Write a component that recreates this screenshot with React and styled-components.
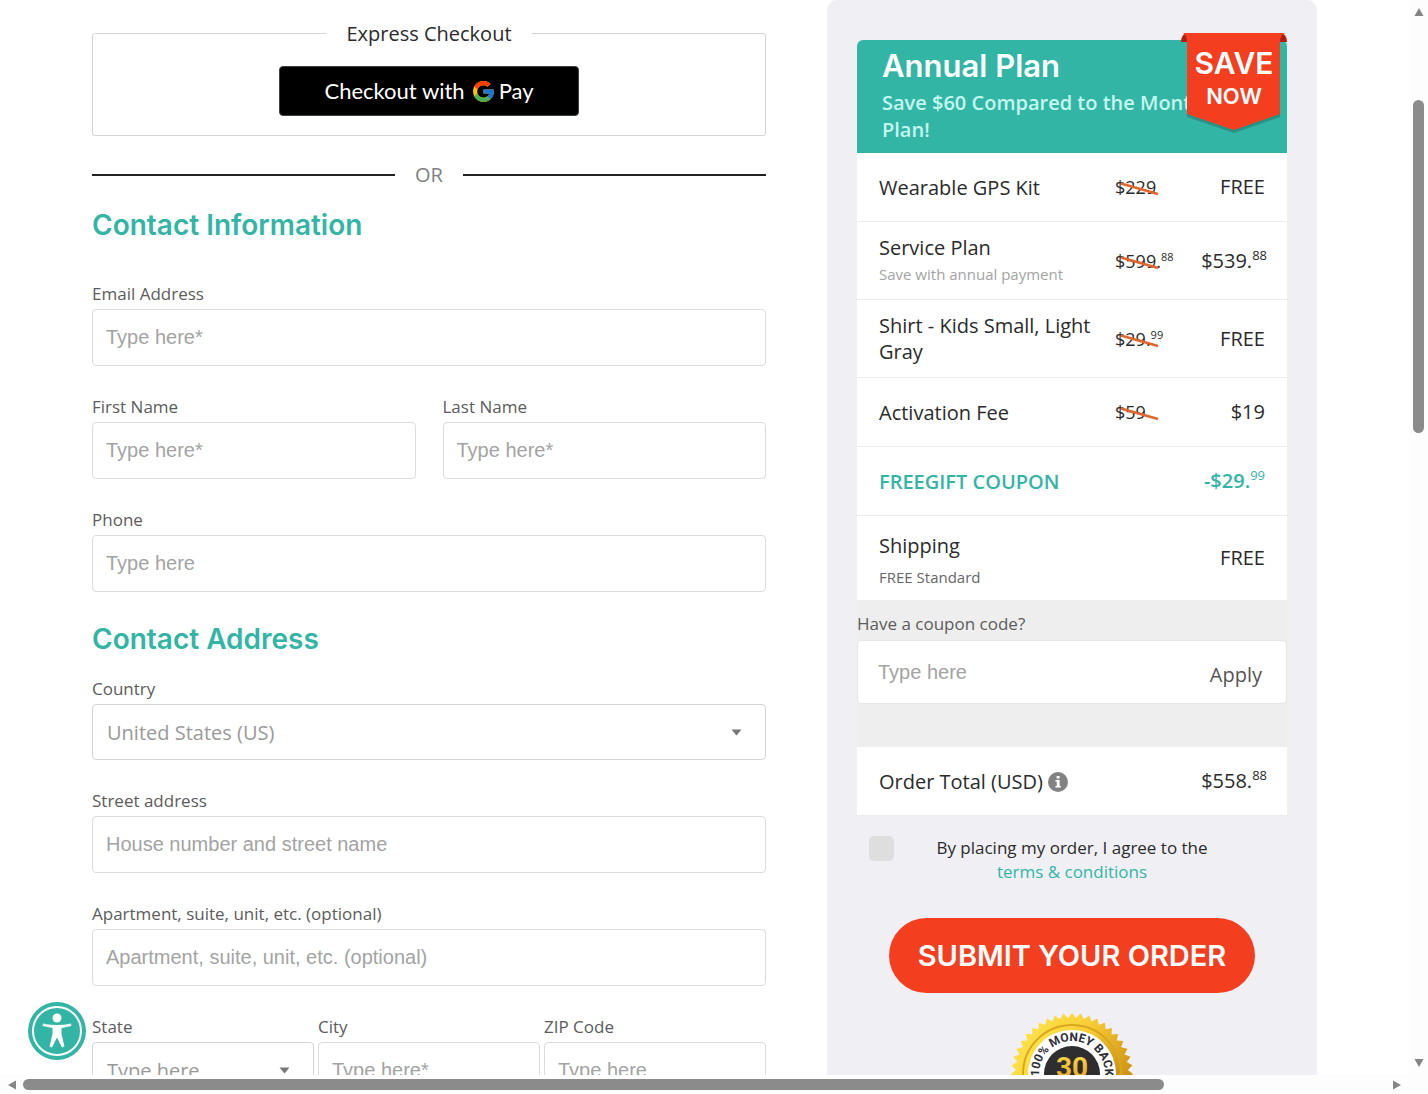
import React from 'react'
import styled, { createGlobalStyle } from 'styled-components'
import { FcGoogle } from 'react-icons/fc'

const GlobalStyle = createGlobalStyle`
    :root {
        --color-teal: #33b5a6;
        --color-red: #f43e20;
        --color-text: #2b2b2b;
        --color-label: #5c5c5c;
        --color-muted: #a3a3a3;
        --color-border: #dcdcdc;
        --font-body: 'Open Sans', sans-serif;
        --font-heading: Inter, sans-serif;
    }
    *, *::before, *::after {
        box-sizing: border-box;
    }
    body {
        margin: 0;
        background: #fff;
        color: var(--color-text);
        font-family: var(--font-body);
        font-size: 20px;
        line-height: 26px;
    }
`

const Shell = styled.div`
    display: grid;
    grid-template-columns: minmax(0, 1fr) 19px;
    grid-template-rows: minmax(0, 1fr) 19px;
    height: 100vh;
    background: #fdfdfd;
`
const Viewport = styled.main`
    position: relative;
    overflow: hidden;
    background: #fff;
`
const Page = styled.form`
    display: grid;
    grid-template-columns: minmax(0, 1fr) 490px;
    column-gap: 61px;
    padding: 0 92px;
`

/* Scrollbars */
const Scrollbar = styled.div`
    display: flex;
    flex-direction: ${(p) => (p.$vertical ? 'column' : 'row')};
    align-items: center;
    justify-content: space-between;
    padding: ${(p) => (p.$vertical ? '7px 0' : '0 7px')};
`
const Track = styled.div`
    display: flex;
    flex: 1;
    flex-direction: ${(p) => (p.$vertical ? 'column' : 'row')};
    align-self: stretch;
    align-items: center;
`
const Thumb = styled.div`
    flex: 0 0 ${(p) => p.$size};
    width: 11px;
    height: 11px;
    border-radius: 6px;
    background: #8b8b8b;
`
const Space = styled.div`
    flex: 0 0 ${(p) => p.$size};
`

/* Form column */
const FormColumn = styled.div`
    padding-top: 20px;
`
const Express = styled.fieldset`
    display: flex;
    justify-content: center;
    margin: 0 0 25px;
    padding: 19px 20px;
    border: 1px solid #d3d3d3;
    border-radius: 3px;
`
const Legend = styled.legend`
    margin: 0 auto;
    padding: 0 20px;
    line-height: 27px;
`
const GooglePay = styled.button`
    display: flex;
    align-items: center;
    justify-content: center;
    width: 300px;
    height: 50px;
    padding: 0;
    border: 1px solid #3c4043;
    border-radius: 4px;
    background: #000;
    color: #fff;
    font-family: Lato, sans-serif;
    font-size: 22px;
    line-height: 26px;

    svg {
        margin: 0 3px 0 6px;
    }
`
const Divider = styled.div`
    display: flex;
    align-items: center;
    gap: 20px;
    margin-bottom: 19px;
    color: #808080;
    line-height: 27px;

    &::before,
    &::after {
        content: '';
        flex: 1;
        height: 2px;
        background: #222;
    }
`
const Heading = styled.h2`
    margin: 0 0 ${(p) => p.$gap};
    color: var(--color-teal);
    font-family: var(--font-heading);
    font-size: 28px;
    font-weight: 600;
    line-height: 36px;
`
const Fields = styled.div`
    display: grid;
    grid-template-columns: repeat(${(p) => p.$columns || 1}, minmax(0, 1fr));
    column-gap: ${(p) => p.$gap || '27px'};
    margin-bottom: 29px;
`
const FieldBox = styled.div`
    display: flex;
    flex-direction: column;
    gap: 3px;
`
const Label = styled.label`
    color: var(--color-label);
    font-size: 17px;
    line-height: 24px;
`
const Input = styled.input`
    width: 100%;
    height: 57px;
    padding: 0 13px;
    border: 1px solid var(--color-border);
    border-radius: 4px;
    background: #fff;
    color: var(--color-text);
    font-family: 'Liberation Sans', Arial, sans-serif;
    font-size: 20px;

    &::placeholder {
        color: var(--color-muted);
        opacity: 1;
    }
`
const SelectBox = styled.div`
    display: grid;
    align-items: center;

    > * {
        grid-area: 1 / 1;
    }
    svg {
        justify-self: end;
        margin-right: 24px;
        pointer-events: none;
    }
`
const Select = styled.select`
    appearance: none;
    width: 100%;
    height: 56px;
    padding: 0 14px;
    border: 1px solid #d3d3d3;
    border-radius: 4px;
    background: #fff;
    color: #999;
    font-family: var(--font-body);
    font-size: 20px;
`

/* Order column */
const OrderPanel = styled.aside`
    padding: 40px 30px;
    border-radius: 10px 10px 0 0;
    background: #f0eff4;
`
const PlanHeader = styled.header`
    position: relative;
    padding: 8px 25px 10px;
    border-radius: 6px 6px 0 0;
    background: var(--color-teal);
`
const PlanTitle = styled.h2`
    margin: 0 0 5px;
    color: #fff;
    font-family: var(--font-heading);
    font-size: 31px;
    font-weight: 600;
    line-height: 36px;
`
const PlanNote = styled.p`
    margin: 0;
    color: #c4f7ef;
    font-size: 20px;
    font-weight: 600;
    line-height: 27px;
`
const BadgeSvg = styled.svg`
    position: absolute;
    top: -8px;
    right: 0;
`
const OrderTable = styled.table`
    width: 100%;
    border-spacing: 0;
    table-layout: fixed;
    background: #fff;
`
const NameCol = styled.col`
    width: 60%;
`
const OldCol = styled.col`
    width: 17%;
`
const NameCell = styled.th`
    height: ${(p) => (p.$last ? '84px' : '69px')};
    padding: ${(p) => (p.$last ? '17px 0 10px 22px' : '13px 0 12px 22px')};
    border-bottom: ${(p) => (p.$last ? '0' : '1px solid #ececec')};
    color: ${(p) => (p.$teal ? 'var(--color-teal)' : 'inherit')};
    font-size: 20px;
    font-weight: ${(p) => (p.$teal ? 600 : 400)};
    text-align: left;
`
const PriceCell = styled.td`
    padding: 0 ${(p) => (p.$wide ? '20px' : '22px')} 0 0;
    border-bottom: ${(p) => (p.$last ? '0' : '1px solid #ececec')};
    color: ${(p) => (p.$teal ? 'var(--color-teal)' : 'inherit')};
    font-weight: ${(p) => (p.$teal ? 600 : 400)};
    text-align: right;
    white-space: nowrap;
`
const OldCell = styled.td`
    padding: 0;
    border-bottom: 1px solid #ececec;
    font-size: 18px;
    white-space: nowrap;
`
const OldPrice = styled.s`
    position: relative;
    text-decoration: none;

    svg {
        position: absolute;
        top: 7px;
        left: 5px;
    }
`
const Cents = styled.sup`
    font-size: ${(p) => (p.$small ? '11px' : '13px')};
    font-weight: 400;
    line-height: 0;
`
const RowNote = styled.small`
    display: block;
    padding-top: ${(p) => (p.$dark ? '5px' : '0')};
    color: ${(p) => (p.$dark ? '#666' : '#a3a3a3')};
    font-size: 15px;
`
const Coupon = styled.section`
    display: flex;
    flex-direction: column;
    gap: 4px;
    padding: 12px 0 43px;
    background: #eee;
`
const CouponBox = styled.div`
    display: flex;
    height: 64px;
    border: 1px solid #e6e6e6;
    border-radius: 5px;
    background: #fff;
`
const CouponInput = styled(Input)`
    flex: 1;
    min-width: 0;
    height: 100%;
    padding: 0 20px;
    border: 0;
`
const Apply = styled.button`
    padding: 4px 24px 0;
    border: 0;
    background: none;
    color: #555;
    font-family: var(--font-body);
    font-size: 20px;
`
const TotalLabel = styled.span`
    display: flex;
    align-items: center;
    gap: 5px;
`
const Terms = styled.div`
    display: grid;
    grid-template-columns: 37px 1fr 37px;
    justify-items: end;
    padding: 20px 0 34px;
    font-size: 17px;
    line-height: 24px;
    text-align: center;

    label {
        justify-self: center;
    }
    a {
        color: var(--color-teal);
        text-decoration: none;
    }
`
const Checkbox = styled.input`
    appearance: none;
    width: 25px;
    height: 25px;
    margin: 0;
    border-radius: 5px;
    background: #dedede;
`
const Closing = styled.div`
    display: flex;
    flex-direction: column;
    align-items: center;
    gap: 19px;
`
const Submit = styled.button`
    width: 366px;
    height: 75px;
    padding: 0;
    border: 0;
    border-radius: 38px;
    background: var(--color-red);
    color: #fff;
    font-family: var(--font-heading);
    font-size: 29px;
    font-weight: 600;
`
const AccessButton = styled.button`
    position: absolute;
    bottom: 15px;
    left: 28px;
    display: flex;
    padding: 0;
    border: 0;
    border-radius: 50%;
    background: none;
`

const ITEMS = [
    { name: 'Wearable GPS Kit', old: '$229', price: 'FREE' },
    {
        name: 'Service Plan',
        note: 'Save with annual payment',
        old: '$599.',
        oldCents: '88',
        price: '$539.',
        cents: '88',
    },
    { name: 'Shirt - Kids Small, Light Gray', old: '$29.', oldCents: '99', price: 'FREE' },
    { name: 'Activation Fee', old: '$59', price: '$19' },
]

const Caret = () => (
    <svg width="11" height="7" viewBox="0 0 11 7" aria-hidden="true">
        <path d="M.5.5h10l-5 6z" fill="#777" />
    </svg>
)

const Arrow = ({ d }) => (
    <svg width="10" height="10" viewBox="0 0 10 10" aria-hidden="true">
        <path d={d} fill="#858585" />
    </svg>
)

const Badge = () => (
    <BadgeSvg width="106" height="102" viewBox="0 0 106 102" role="img" aria-label="Save now">
        <path d="M0 10Q0 1 8 1H98Q106 1 106 10H98L90 4H14L7 10Z" fill="#ad1f0d" />
        <path d="M6 80V85L53 101L99 85V80Z" fill="#1f6f66" opacity=".5" />
        <path d="M2 1H104Q99 3 99 10V82L53 98L6 82V10Q6 3 2 1Z" fill="#f43e20" />
        <g fill="#fff" fontFamily="Inter, sans-serif" fontWeight="600" textAnchor="middle">
            <text x="53" y="42" fontSize="30">SAVE</text>
            <text x="53" y="72" fontSize="22">NOW</text>
        </g>
    </BadgeSvg>
)

const sealPoints = Array.from({ length: 88 }, (_, i) => {
    const radius = i % 2 ? 56 : 61
    const angle = (i * Math.PI) / 44
    return `${(62 + radius * Math.sin(angle)).toFixed(1)},${(62 - radius * Math.cos(angle)).toFixed(1)}`
}).join(' ')

const Seal = () => (
    <svg width="124" height="124" viewBox="0 0 124 124" role="img" aria-label="30 day money back guarantee">
        <defs>
            <linearGradient id="gold" x1="0" y1="0" x2="1" y2=".6">
                <stop offset="0" stopColor="#ffe94f" />
                <stop offset=".5" stopColor="#f9cf37" />
                <stop offset="1" stopColor="#c98a10" />
            </linearGradient>
            <linearGradient id="digits" x1="0" y1="0" x2="0" y2="1">
                <stop offset="0" stopColor="#fbe04a" />
                <stop offset="1" stopColor="#e69a1b" />
            </linearGradient>
            <path id="arc" d="M33.4 78.5A33 33 0 1 1 90.6 78.5" />
        </defs>
        <polygon points={sealPoints} fill="url(#gold)" />
        <circle cx="62" cy="62" r="49" fill="url(#gold)" stroke="#dba61f" strokeWidth="2" />
        <circle cx="62" cy="62" r="44" fill="#fff" />
        <circle cx="62" cy="62" r="28" fill="#2e2e30" />
        <text fontFamily="Roboto, sans-serif" fontSize="12" fontWeight="700" fill="#2e2e38" textAnchor="middle">
            <textPath href="#arc" startOffset="50%">100% MONEY BACK</textPath>
        </text>
        <text x="62" y="65" fontFamily="Roboto, sans-serif" fontSize="28" fontWeight="700" fill="url(#digits)" textAnchor="middle">30</text>
    </svg>
)

const Field = ({ id, label, placeholder, type = 'text' }) => (
    <FieldBox>
        <Label htmlFor={id}>{label}</Label>
        <Input id={id} type={type} placeholder={placeholder} />
    </FieldBox>
)

const SelectField = ({ id, label, option }) => (
    <FieldBox>
        <Label htmlFor={id}>{label}</Label>
        <SelectBox>
            <Select id={id}>
                <option>{option}</option>
            </Select>
            <Caret />
        </SelectBox>
    </FieldBox>
)

const ContactForm = () => (
    <FormColumn>
        <Express>
            <Legend>Express Checkout</Legend>
            <GooglePay type="button">
                Checkout with <FcGoogle size={25} /> Pay
            </GooglePay>
        </Express>
        <Divider>OR</Divider>
        <Heading $gap="39px">Contact Information</Heading>
        <Fields>
            <Field id="email" label="Email Address" placeholder="Type here*" type="email" />
        </Fields>
        <Fields $columns={2}>
            <Field id="first" label="First Name" placeholder="Type here*" />
            <Field id="last" label="Last Name" placeholder="Type here*" />
        </Fields>
        <Fields>
            <Field id="phone" label="Phone" placeholder="Type here" type="tel" />
        </Fields>
        <Heading $gap="20px">Contact Address</Heading>
        <Fields>
            <SelectField id="country" label="Country" option="United States (US)" />
        </Fields>
        <Fields>
            <Field id="street" label="Street address" placeholder="House number and street name" />
        </Fields>
        <Fields>
            <Field
                id="apartment"
                label="Apartment, suite, unit, etc. (optional)"
                placeholder="Apartment, suite, unit, etc. (optional)"
            />
        </Fields>
        <Fields $columns={3} $gap="4px">
            <SelectField id="state" label="State" option="Type here" />
            <Field id="city" label="City" placeholder="Type here*" />
            <Field id="zip" label="ZIP Code" placeholder="Type here" />
        </Fields>
    </FormColumn>
)

const OrderSummary = () => (
    <OrderPanel>
        <PlanHeader>
            <PlanTitle>Annual Plan</PlanTitle>
            <PlanNote>Save $60 Compared to the Monthly Plan!</PlanNote>
            <Badge />
        </PlanHeader>
        <OrderTable>
            <colgroup>
                <NameCol />
                <OldCol />
                <col />
            </colgroup>
            <tbody>
                {ITEMS.map((item) => (
                    <tr key={item.name}>
                        <NameCell scope="row">
                            {item.name}
                            {item.note && <RowNote>{item.note}</RowNote>}
                        </NameCell>
                        <OldCell>
                            <OldPrice>
                                {item.old}
                                {item.oldCents && <Cents $small>{item.oldCents}</Cents>}
                                <svg width="40" height="14" viewBox="0 0 40 14" aria-hidden="true">
                                    <path d="M1 1.5L38 12" stroke="#e2662c" strokeWidth="2.5" />
                                </svg>
                            </OldPrice>
                        </OldCell>
                        <PriceCell $wide={!!item.cents}>
                            {item.price}
                            {item.cents && <Cents>{item.cents}</Cents>}
                        </PriceCell>
                    </tr>
                ))}
                <tr>
                    <NameCell scope="row" colSpan={2} $teal>
                        FREEGIFT COUPON
                    </NameCell>
                    <PriceCell $teal>
                        -$29.<Cents>99</Cents>
                    </PriceCell>
                </tr>
                <tr>
                    <NameCell scope="row" colSpan={2} $last>
                        Shipping
                        <RowNote $dark>FREE Standard</RowNote>
                    </NameCell>
                    <PriceCell $last>FREE</PriceCell>
                </tr>
            </tbody>
        </OrderTable>
        <Coupon>
            <Label htmlFor="coupon">Have a coupon code?</Label>
            <CouponBox>
                <CouponInput id="coupon" placeholder="Type here" />
                <Apply type="button">Apply</Apply>
            </CouponBox>
        </Coupon>
        <OrderTable>
            <tbody>
                <tr>
                    <NameCell scope="row">
                        <TotalLabel>
                            Order Total (USD)
                            <svg width="20" height="20" viewBox="0 0 20 20" aria-hidden="true">
                                <circle cx="10" cy="10" r="10" fill="#828282" />
                                <path d="M8.6 4h3v2.6h-3zM7.4 8h4.2v6h1.2v1.6H7.4V14h1.4V9.6H7.4z" fill="#fff" />
                            </svg>
                        </TotalLabel>
                    </NameCell>
                    <PriceCell $wide>
                        $558.<Cents>88</Cents>
                    </PriceCell>
                </tr>
            </tbody>
        </OrderTable>
        <Terms>
            <Checkbox id="terms" type="checkbox" />
            <label htmlFor="terms">
                By placing my order, I agree to the
                <br />
                <a href="#terms">terms &amp; conditions</a>
            </label>
        </Terms>
        <Closing>
            <Submit type="submit">SUBMIT YOUR ORDER</Submit>
            <Seal />
        </Closing>
    </OrderPanel>
)

const App = () => (
    <Shell>
        <GlobalStyle />
        <Viewport>
            <Page>
                <ContactForm />
                <OrderSummary />
            </Page>
            <AccessButton type="button" aria-label="Accessibility">
                <svg width="58" height="58" viewBox="0 0 58 58" aria-hidden="true">
                    <circle cx="29" cy="29" r="29" fill="#33b5a6" />
                    <circle cx="29" cy="29" r="24" fill="none" stroke="#fff" strokeWidth="2" />
                    <circle cx="29" cy="16" r="4.5" fill="#fff" />
                    <path
                        d="M15 21.5Q29 24.5 43 21.5L43.4 24L33.5 26V32L36.5 44.5L34 45.5L29 35.5L24 45.5L21.5 44.5L24.5 32V26L14.6 24Z"
                        fill="#fff"
                    />
                </svg>
            </AccessButton>
        </Viewport>
        <Scrollbar $vertical>
            <Arrow d="M5 1L9.5 9H.5z" />
            <Track $vertical>
                <Space $size="8%" />
                <Thumb $size="32%" />
            </Track>
            <Arrow d="M5 9L.5 1h9z" />
        </Scrollbar>
        <Scrollbar>
            <Arrow d="M1 5L9 .5v9z" />
            <Track>
                <Space $size="6px" />
                <Thumb $size="83%" />
            </Track>
            <Arrow d="M9 5L1 9.5v-9z" />
        </Scrollbar>
    </Shell>
)

export default App
